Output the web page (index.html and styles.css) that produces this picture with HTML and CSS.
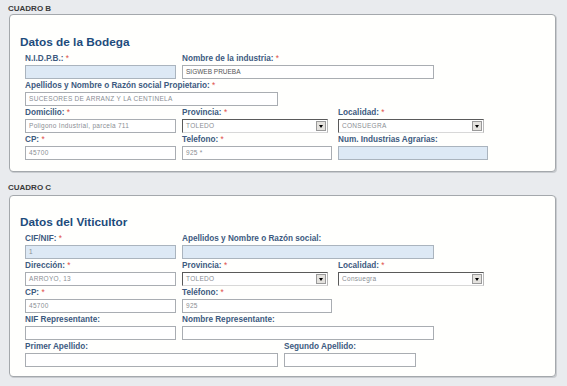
FILE: index.html
```html
<!DOCTYPE html>
<html lang="es">
<head>
<meta charset="utf-8">
<title>Cuadros</title>
<link rel="stylesheet" href="styles.css">
</head>
<body>
<div class="page">
  <div class="cuadro-label cuadro-b">CUADRO B</div>
  <div class="box box-b">
    <h2 class="title">Datos de la Bodega</h2>
    <div class="form">
      <div class="row">
        <div class="field slot1"><label>N.I.D.P.B.: <span class="req">*</span></label><div class="input ro w151"></div></div>
        <div class="field"><label>Nombre de la industria: <span class="req">*</span></label><div class="input w252">SIGWEB PRUEBA</div></div>
      </div>
      <div class="row">
        <div class="field"><label>Apellidos y Nombre o Razón social Propietario: <span class="req">*</span></label><div class="input w253 blur">SUCESORES DE ARRANZ Y LA CENTINELA</div></div>
      </div>
      <div class="row">
        <div class="field slot1"><label>Domicilio: <span class="req">*</span></label><div class="input w151 blur">Poligono Industrial, parcela 711</div></div>
        <div class="field slot2"><label>Provincia: <span class="req">*</span></label><div class="select w146"><span class="val blur">TOLEDO</span><span class="arrow"></span></div></div>
        <div class="field"><label>Localidad: <span class="req">*</span></label><div class="select w146"><span class="val blur">CONSUEGRA</span><span class="arrow"></span></div></div>
      </div>
      <div class="row">
        <div class="field slot1"><label>CP: <span class="req">*</span></label><div class="input w151 blur">45700</div></div>
        <div class="field slot2"><label>Telefono: <span class="req">*</span></label><div class="input w150 blur">925 *</div></div>
        <div class="field"><label>Num. Industrias Agrarias:</label><div class="input ro w150"></div></div>
      </div>
    </div>
  </div>

  <div class="cuadro-label cuadro-c">CUADRO C</div>
  <div class="box box-c">
    <h2 class="title">Datos del Viticultor</h2>
    <div class="form">
      <div class="row">
        <div class="field slot1"><label>CIF/NIF: <span class="req">*</span></label><div class="input ro w151 blur">1</div></div>
        <div class="field"><label>Apellidos y Nombre o Razón social:</label><div class="input ro w252"></div></div>
      </div>
      <div class="row">
        <div class="field slot1"><label>Dirección: <span class="req">*</span></label><div class="input w151 blur">ARROYO, 13</div></div>
        <div class="field slot2"><label>Provincia: <span class="req">*</span></label><div class="select w146"><span class="val blur">TOLEDO</span><span class="arrow"></span></div></div>
        <div class="field"><label>Localidad: <span class="req">*</span></label><div class="select w146"><span class="val blur">Consuegra</span><span class="arrow"></span></div></div>
      </div>
      <div class="row">
        <div class="field slot1"><label>CP: <span class="req">*</span></label><div class="input w151 blur">45700</div></div>
        <div class="field slot2"><label>Teléfono: <span class="req">*</span></label><div class="input w150 blur">925</div></div>
      </div>
      <div class="row">
        <div class="field slot1"><label>NIF Representante:</label><div class="input w151"></div></div>
        <div class="field"><label>Nombre Representante:</label><div class="input w252"></div></div>
      </div>
      <div class="row">
        <div class="field slot-wide"><label>Primer Apellido:</label><div class="input w253"></div></div>
        <div class="field"><label>Segundo Apellido:</label><div class="input w132"></div></div>
      </div>
    </div>
  </div>
</div>
</body>
</html>
```
FILE: styles.css
```css
* { box-sizing: border-box; }
html, body { margin: 0; padding: 0; }
body {
  background: #e9ebee;
  font-family: "Liberation Sans", Arial, sans-serif;
  width: 567px;
  height: 386px;
  overflow: hidden;
}
.page { padding: 4px 0 0 0; }
.cuadro-label {
  font-size: 8px;
  font-weight: bold;
  color: #3a3a3a;
  line-height: 10px;
  height: 10px;
  padding-left: 8px;
}
.cuadro-c { margin-top: 11px; margin-bottom: 2px; }
.box {
  margin-left: 9px;
  width: 547px;
  background: #fffffd;
  border: 1px solid #a4a8ac;
  border-radius: 4px;
  box-shadow: 1px 1px 0 #c9ccd0;
  padding: 20px 0 11px 10px;
}
.box-b { height: 158px; }
.box-c { height: 182px; padding-top: 19px; padding-bottom: 9px; }
.title {
  margin: 0;
  font-size: 11.8px;
  line-height: 14px;
  font-weight: bold;
  color: #1d4b7c;
}
.form { padding-left: 5px; margin-top: 3px; }
.row { display: flex; }
.field { display: flex; flex-direction: column; }
.slot1 { width: 157px; }
.slot2 { width: 156px; }
.slot-wide { width: 259px; }
label {
  font-size: 8.2px;
  font-weight: bold;
  color: #3d5a80;
  height: 13px;
  line-height: 14px;
  white-space: nowrap;
}
.req { color: #e0504a; font-weight: normal; }
.input, .select {
  height: 14px;
  border: 1px solid #a9adb2;
  background: #fff;
  font-size: 6.5px;
  line-height: 12px;
  color: #555;
  padding-left: 3px;
  white-space: nowrap;
  overflow: hidden;
}
.input.ro { background: #dde9f5; border-color: #aab4be; }
.blur { color: #8a8e94; letter-spacing: 0.3px; }
.select {
  display: flex;
  align-items: center;
  justify-content: space-between;
  border-top: 1px solid #5a5a5a;
  border-left: 1px solid #5a5a5a;
  border-right: 1px solid #b8b8b8;
  border-bottom: 1px solid #d8d8d8;
  padding-right: 1px;
}
.select .val { line-height: 12px; }
.arrow {
  position: relative;
  width: 10px;
  height: 10px;
  background: #e4e2de;
  border: 1px solid #9a9a9a;
  flex: none;
}
.arrow::after {
  content: "";
  position: absolute;
  left: 2px;
  top: 3px;
  border-left: 2px solid transparent;
  border-right: 2px solid transparent;
  border-top: 3px solid #000;
}
.w151 { width: 151px; }
.w252 { width: 252px; }
.w253 { width: 253px; }
.w146 { width: 146px; }
.w150 { width: 150px; }
.w132 { width: 132px; }
```
